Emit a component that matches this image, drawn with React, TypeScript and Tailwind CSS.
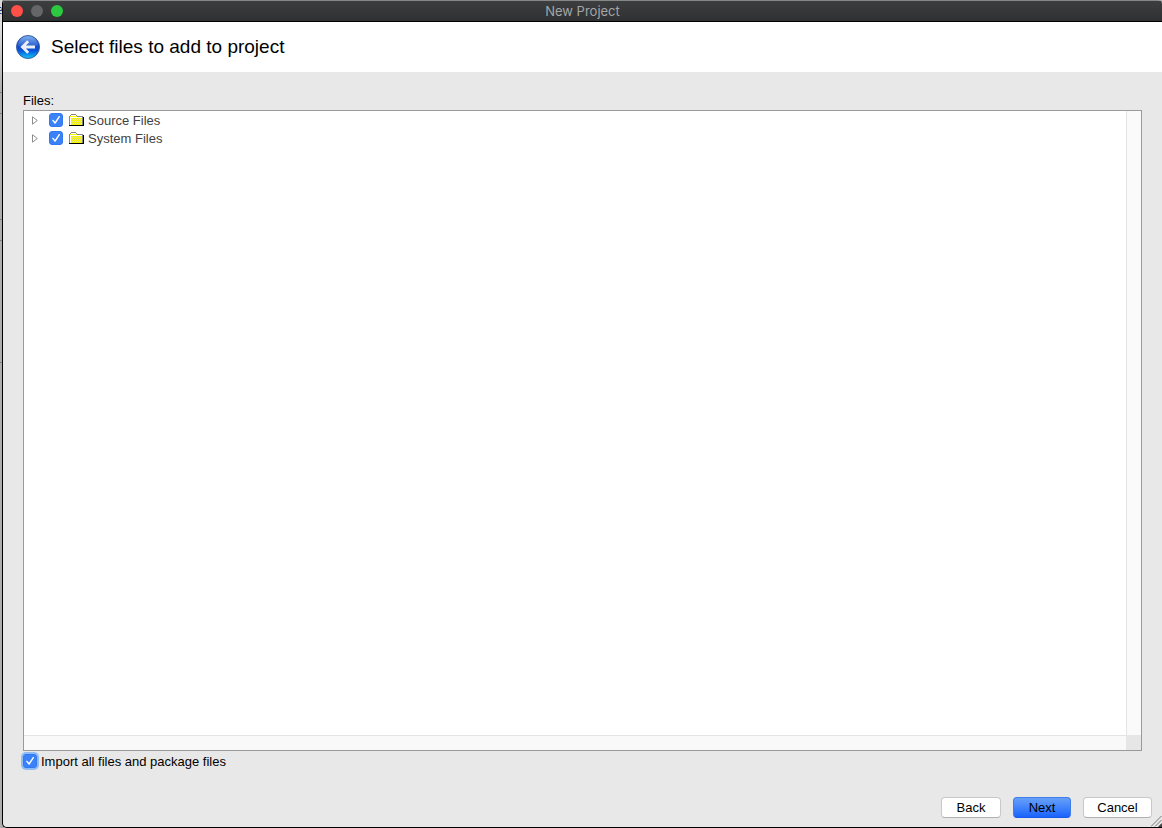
import { useId, useState } from "react";
import type { ReactNode } from "react";

function CheckBox({ id, focused = false }: { id: string; focused?: boolean }) {
  const [checked, setChecked] = useState(true);
  return (
    <span className="grid size-3.5 shrink-0">
      <input
        id={id}
        type="checkbox"
        checked={checked}
        onChange={(e) => setChecked(e.target.checked)}
        className={
          "col-start-1 row-start-1 size-3.5 appearance-none rounded-[3px] border border-[#b4b4b4] bg-white outline-none checked:border-[#3478f0] checked:bg-[#3b82f8] " +
          (focused ? "ring-2 ring-[#8fbcf5]" : "")
        }
      />
      {checked && (
        <svg viewBox="0 0 14 14" className="pointer-events-none col-start-1 row-start-1 size-3.5" aria-hidden="true">
          <path d="M3.9 7.4 L6.1 10 L10.3 3.7" fill="none" stroke="#fff" strokeWidth="1.4" strokeLinecap="round" strokeLinejoin="round" />
        </svg>
      )}
    </span>
  );
}

const ditherDots = Array.from({ length: 7 }, (_, row) =>
  Array.from({ length: 6 }, (_, col) => `M${2 + col * 2 + (row % 2)} ${5 + row}h1v1h-1z`).slice(0, row % 2 ? 5 : 6).join(""),
).join("");

function FolderIcon() {
  return (
    <svg viewBox="0 0 16 14" width="16" height="14" className="shrink-0" shapeRendering="crispEdges" aria-hidden="true">
      <path d="M0 3h1v-1h1v-1h5v1h1v1h6v10h-14z" fill="#858585" />
      <path d="M1 3h1v-1h5v1h1v1h5v8h-12z" fill="#ffff00" />
      <path d={ditherDots} fill="#dede62" />
      <path d="M1 4h12v1h-11v7h-1z" fill="#fff" />
      <path d="M2 2h5v1h-5z" fill="#fff" />
      <path d="M14 4h1v9h-15v-1h14z" fill="#000" />
    </svg>
  );
}

function TreeRow({ label }: { label: string }) {
  const id = useId();
  return (
    <li className="flex h-[18px] items-center pl-2">
      <button type="button" aria-label={`Expand ${label}`} className="mr-3 flex h-3.5 w-[5px] items-center">
        <svg viewBox="0 0 6 9" width="6" height="9" className="shrink-0" aria-hidden="true">
          <path d="M0.5 0.8 L5.3 4.5 L0.5 8.2 Z" fill="#fff" stroke="#808080" strokeWidth="0.9" />
        </svg>
      </button>
      <CheckBox id={id} />
      <label htmlFor={id} className="ml-1.5 flex items-center gap-[3px] text-[#424242]">
        <FolderIcon />
        <span className="pt-0.5">{label}</span>
      </label>
    </li>
  );
}

function BackArrow() {
  return (
    <svg viewBox="0 0 24 24" width="24" height="24" aria-hidden="true">
      <defs>
        <linearGradient id="orb" x1="0" y1="0" x2="0" y2="1">
          <stop offset="0" stopColor="#3976d8" />
          <stop offset="0.45" stopColor="#164bcb" />
          <stop offset="0.65" stopColor="#0754d9" />
          <stop offset="1" stopColor="#14c8fa" />
        </linearGradient>
        <linearGradient id="gloss" x1="0" y1="0" x2="0" y2="1">
          <stop offset="0" stopColor="#9cc4f4" stopOpacity="0.75" />
          <stop offset="1" stopColor="#4b80df" stopOpacity="0.3" />
        </linearGradient>
      </defs>
      <circle cx="12" cy="12" r="11.5" fill="url(#orb)" stroke="#33569b" strokeWidth="0.9" />
      <path d="M2 10.5a10 9.5 0 0 1 20 0q-10 4-20 0z" fill="url(#gloss)" />
      <path d="M12.2 6.2 L6.4 12 L12.2 17.8 M6.8 12 H19" fill="none" stroke="#eceff6" strokeWidth="2.8" strokeLinejoin="miter" />
    </svg>
  );
}

function PushButton({ children, primary = false, width }: { children: ReactNode; primary?: boolean; width: string }) {
  return (
    <button
      type="button"
      className={
        "h-[21px] rounded-[4px] border text-center leading-[19px] text-black " +
        width +
        (primary
          ? " border-[#3f7de8] border-b-[#1b59e8] bg-linear-to-b from-[#67a0f8] to-[#1a62fd]"
          : " border-[#c8c8c8] border-b-[#b0b0b0] bg-white")
      }
    >
      {children}
    </button>
  );
}

function BackgroundEdge() {
  return (
    <div className="flex w-0.5 shrink-0 flex-col bg-[#adadad]" aria-hidden="true">
      <div className="h-[22px] bg-[#d9d9d9]">
        <svg width="2" height="22" viewBox="0 0 2 22">
          <path d="M0 7.5h1l1 1v2h-2M0 13.5h1.5" fill="none" stroke="#1e3a8a" />
        </svg>
      </div>
      <div className="h-[71px] border-b border-[#808080] bg-linear-to-b from-[#e0e0e0] to-[#adadad]" />
      <div className="h-[21px] border-b border-[#808080]" />
      <div className="h-[106px] border-b border-[#808080]" />
      <div className="h-[21px] border-b border-[#808080]" />
      <div className="h-[122px] border-b border-[#808080]" />
    </div>
  );
}

export default function App() {
  return (
    <div className="flex min-h-screen bg-[#a8a8a8] font-['Liberation_Sans',Arial,sans-serif] text-[13px] leading-4 text-black">
      <BackgroundEdge />
      <div className="flex min-w-0 grow flex-col overflow-hidden rounded-t-[4px] rounded-bl-[5px] border-b border-l border-black bg-[#e8e8e8]">
        <header className="grid h-[22px] shrink-0 grid-cols-[1fr_auto_1fr] items-center border-t border-b border-t-[#858788] border-b-black bg-linear-to-b from-[#3c3e3f] to-[#2e3031] px-2">
          <div className="flex gap-2">
            <button type="button" aria-label="Close" className="size-3 rounded-full bg-[#ff5148]" />
            <button type="button" aria-label="Minimize" disabled className="size-3 rounded-full bg-[#656668]" />
            <button type="button" aria-label="Zoom" className="size-3 rounded-full bg-[#2cc840]" />
          </div>
          <span className="font-['Inter',sans-serif] text-[#a5a6a7]">New Project</span>
        </header>

        <div className="flex h-[50px] shrink-0 items-center gap-[11px] bg-white pl-[13px]">
          <button type="button" aria-label="Go back" className="size-6">
            <BackArrow />
          </button>
          <h1 className="text-[19px] leading-6">Select files to add to project</h1>
        </div>

        <main className="flex grow flex-col px-5 pt-[21px] pb-[9px]">
          <h2 className="h-[17px]">Files:</h2>
          <div className="grid grow grid-cols-[1fr_15px] grid-rows-[1fr_15px] border border-[#9a9a9a] bg-white">
            <ul aria-label="Files">
              <TreeRow label="Source Files" />
              <TreeRow label="System Files" />
            </ul>
            <div className="border-l border-[#e4e4e4] bg-[#fafafa]" />
            <div className="border-t border-[#e4e4e4] bg-[#f9f9f9]" />
            <div className="bg-[#e6e6e6]" />
          </div>
          <div className="mt-[3px] flex items-start gap-1">
            <CheckBox id="import-all" focused />
            <label htmlFor="import-all">Import all files and package files</label>
          </div>
        </main>

        <footer className="flex shrink-0 justify-end pt-[18px] pl-5">
          <div className="flex gap-3 pb-[9px]">
            <PushButton width="w-[60px]">Back</PushButton>
            <PushButton width="w-[58px]" primary>Next</PushButton>
            <PushButton width="w-[69px]">Cancel</PushButton>
          </div>
          <svg width="11" height="12" viewBox="0 0 11 12" className="-ml-px self-end" aria-hidden="true">
            <path d="M0 11.5 L10.5 1 M4 11.5 L10.5 5 M8 11.5 L10.5 9" fill="none" stroke="#777" strokeWidth="1" />
            <path d="M11 8v4h-4z" fill="#444" />
          </svg>
        </footer>
      </div>
    </div>
  );
}
